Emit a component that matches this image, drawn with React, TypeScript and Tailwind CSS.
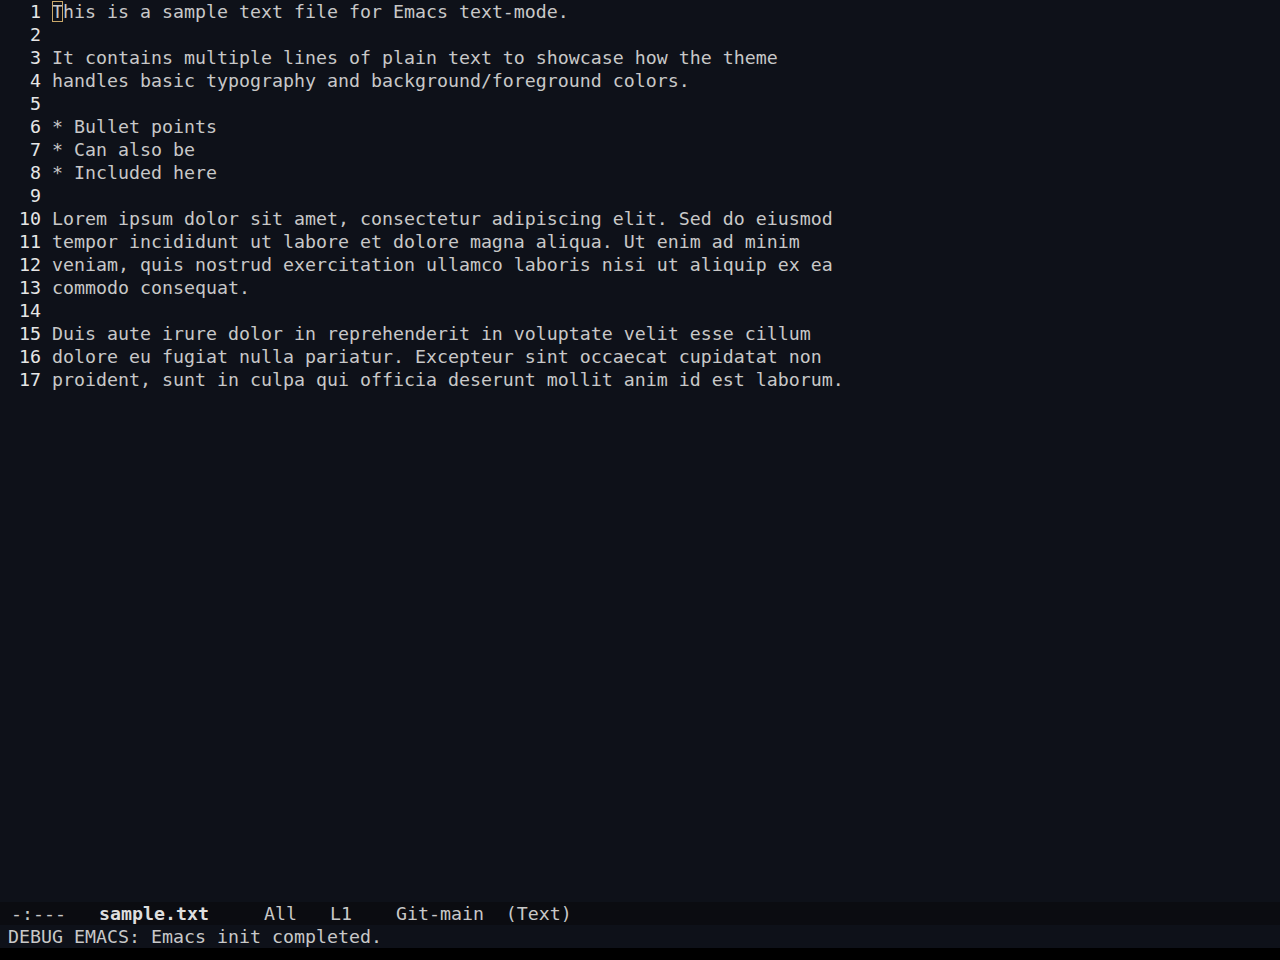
import React from 'react';

const lines: string[] = [
  'This is a sample text file for Emacs text-mode.',
  '',
  'It contains multiple lines of plain text to showcase how the theme',
  'handles basic typography and background/foreground colors.',
  '',
  '* Bullet points',
  '* Can also be',
  '* Included here',
  '',
  'Lorem ipsum dolor sit amet, consectetur adipiscing elit. Sed do eiusmod',
  'tempor incididunt ut labore et dolore magna aliqua. Ut enim ad minim',
  'veniam, quis nostrud exercitation ullamco laboris nisi ut aliquip ex ea',
  'commodo consequat.',
  '',
  'Duis aute irure dolor in reprehenderit in voluptate velit esse cillum',
  'dolore eu fugiat nulla pariatur. Excepteur sint occaecat cupidatat non',
  'proident, sunt in culpa qui officia deserunt mollit anim id est laborum.',
];

const mono = "font-['DejaVu_Sans_Mono',monospace] text-[18.27px] leading-[23px]";

export default function App() {
  return (
    <div className={`flex h-screen flex-col bg-[#0e1119] ${mono} text-[#c8c8c8]`}>
      {/* Buffer */}
      <div className="flex-1 overflow-hidden">
        {lines.map((line, i) => (
          <div key={i} className="flex h-[23px] whitespace-pre">
            <span className="ml-[19px] mr-[11px] w-[22px] text-right text-[#e6e6e6]">{i + 1}</span>
            {i === 0 ? (
              <span>
                <span className="outline outline-1 -outline-offset-1 outline-[#c9a86a]">T</span>
                {line.slice(1)}
              </span>
            ) : (
              <span>{line}</span>
            )}
          </div>
        ))}
      </div>

      {/* Mode line */}
      <div className="flex h-[23px] items-center whitespace-pre bg-[#0b0c11] pl-[11px]">
        <span>-:---   </span>
        <span className="font-bold text-[#dedede]">sample.txt</span>
        <span>     All   L1    Git-main  (Text)</span>
      </div>

      {/* Echo area */}
      <div className="h-[23px] whitespace-pre pl-[8px]">DEBUG EMACS: Emacs init completed.</div>

      <div className="h-[12px] bg-black" />
    </div>
  );
}
